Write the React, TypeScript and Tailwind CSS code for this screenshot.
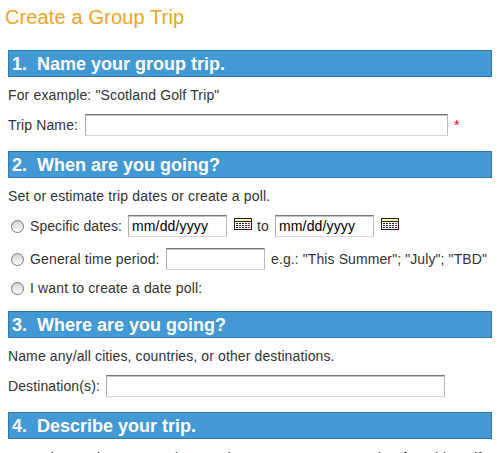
import type { ReactNode } from 'react';

interface SectionProps {
  number: number;
  title: string;
  className?: string;
}

function SectionHeader({ number, title, className = '' }: SectionProps) {
  return (
    <h2 className={`flex h-[27px] w-[484px] items-center gap-[10px] border border-[#2f79ad] bg-[#4399d3] pt-[2px] pl-[3px] text-[18px] leading-[25px] font-bold tracking-[0] text-white ${className}`}>
      <span>{number}.</span>
      <span>{title}</span>
    </h2>
  );
}

function TextField({ label, value = '', className }: { label: string; value?: string; className: string }) {
  return (
    <input
      type="text"
      aria-label={label}
      defaultValue={value}
      className={`h-[22px] shrink-0 border border-t-[#777777] border-r-[#bbbbbb] border-b-[#d8d8d8] border-l-[#aaaaaa] bg-white px-[3px] text-[14px] tracking-[0.14px] text-black shadow-[inset_0_1px_0_#c4c4c4] outline-none ${className}`}
    />
  );
}

function Radio({ label }: { label: string }) {
  return (
    <input
      type="radio"
      name="dates"
      aria-label={label}
      className="mt-px mr-[6px] ml-[3px] size-[13px] shrink-0 appearance-none rounded-full border border-[#777777] bg-linear-to-b from-[#d2d2d2] to-[#ffffff]"
    />
  );
}

function CalendarIcon({ className }: { className: string }) {
  const columns = [2, 5, 8, 11];
  return (
    <svg width="18" height="12" viewBox="0 0 18 12" shapeRendering="crispEdges" className={`shrink-0 ${className}`}>
      <rect width="18" height="12" fill="#222222" />
      <rect x="1" y="1" width="16" height="2" fill="#ffffaa" />
      <rect x="1" y="4" width="16" height="7" fill="#ffffff" />
      {[5, 7, 9].map((y) => (
        <g key={y}>
          {columns.map((x) => (
            <rect key={x} x={x} y={y} width="2" height="1" fill="#222222" />
          ))}
          <rect x="14" y={y} width="2" height="1" fill="#ee2222" />
        </g>
      ))}
    </svg>
  );
}

function Row({ children, className }: { children: ReactNode; className: string }) {
  return <div className={`flex h-[22px] items-center whitespace-nowrap ${className}`}>{children}</div>;
}

export default function App() {
  return (
    <main className="h-[453px] w-[498px] overflow-hidden bg-white pl-2 font-['Liberation_Sans',Arial,sans-serif] text-[14px] leading-[18px] tracking-[0.14px] text-[#333333]">
      <h1 className="-ml-[3px] pt-[5px] text-[20px] leading-[24px] tracking-[0.13px] text-[#efa51f]">Create a Group Trip</h1>

      <SectionHeader number={1} title="Name your group trip." className="mt-[21px]" />
      <p className="mt-[9px]">For example: "Scotland Golf Trip"</p>
      <Row className="mt-[10px]">
        <label className="w-[77px]">Trip Name:</label>
        <TextField label="Trip Name" className="w-[363px]" />
        <span className="ml-[6px] text-[#ff0000]">*</span>
      </Row>

      <SectionHeader number={2} title="When are you going?" className="mt-[15px]" />
      <p className="mt-[9px]">Set or estimate trip dates or create a poll.</p>
      <Row className="mt-[10px]">
        <Radio label="Specific dates" />
        <span className="w-[98px] tracking-[0.06px]">Specific dates:</span>
        <TextField label="Start date" value="mm/dd/yyyy" className="w-[99px]" />
        <CalendarIcon className="mb-1 ml-[7px]" />
        <span className="ml-[5px] w-[18px]">to</span>
        <TextField label="End date" value="mm/dd/yyyy" className="w-[99px]" />
        <CalendarIcon className="mb-1 ml-[7px]" />
      </Row>
      <Row className="mt-[11px]">
        <Radio label="General time period" />
        <span className="w-[136px]">General time period:</span>
        <TextField label="General time period" className="w-[99px]" />
        <span className="ml-[6px] tracking-[0.1px]">e.g.: "This Summer"; "July"; "TBD"</span>
      </Row>
      <Row className="mt-[7px]">
        <Radio label="Date poll" />
        <span>I want to create a date poll:</span>
      </Row>

      <SectionHeader number={3} title="Where are you going?" className="mt-[12px]" />
      <p className="mt-[9px] tracking-[0.11px]">Name any/all cities, countries, or other destinations.</p>
      <Row className="mt-[10px]">
        <label className="w-[98px] tracking-[0.11px]">Destination(s):</label>
        <TextField label="Destinations" className="w-[339px]" />
      </Row>

      <SectionHeader number={4} title="Describe your trip." className="mt-[15px]" />
      <p className="mt-[10px] whitespace-nowrap text-[#111111]">
        example: "It's been ages since we have seen our get together for a big golf
      </p>
    </main>
  );
}
